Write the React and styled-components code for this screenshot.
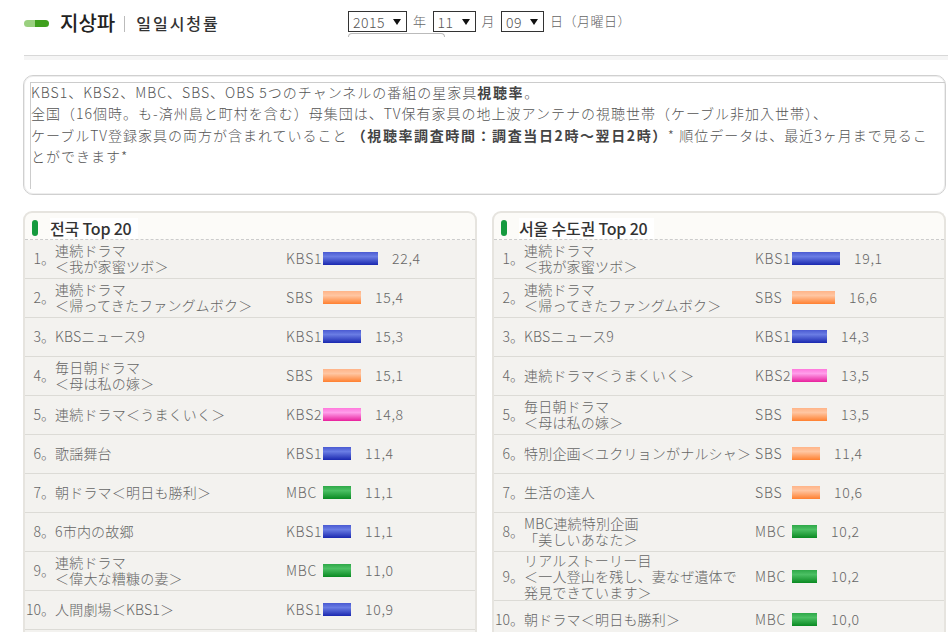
import React from 'react';
import styled, { createGlobalStyle } from 'styled-components';

const leftRows = [
  { rank: '1。', name: ['連続ドラマ', '＜我が家蜜ツボ＞'], channel: 'KBS1', bar: 55, value: '22,4' },
  { rank: '2。', name: ['連続ドラマ', '＜帰ってきたファングムボク＞'], channel: 'SBS', bar: 38, value: '15,4' },
  { rank: '3。', name: ['KBSニュース9'], channel: 'KBS1', bar: 38, value: '15,3' },
  { rank: '4。', name: ['毎日朝ドラマ', '＜母は私の嫁＞'], channel: 'SBS', bar: 38, value: '15,1' },
  { rank: '5。', name: ['連続ドラマ＜うまくいく＞'], channel: 'KBS2', bar: 38, value: '14,8' },
  { rank: '6。', name: ['歌謡舞台'], channel: 'KBS1', bar: 28, value: '11,4' },
  { rank: '7。', name: ['朝ドラマ＜明日も勝利＞'], channel: 'MBC', bar: 28, value: '11,1' },
  { rank: '8。', name: ['6市内の故郷'], channel: 'KBS1', bar: 28, value: '11,1' },
  { rank: '9。', name: ['連続ドラマ', '＜偉大な糟糠の妻＞'], channel: 'MBC', bar: 28, value: '11,0' },
  { rank: '10。', name: ['人間劇場＜KBS1＞'], channel: 'KBS1', bar: 28, value: '10,9' },
];

const rightRows = [
  { rank: '1。', name: ['連続ドラマ', '＜我が家蜜ツボ＞'], channel: 'KBS1', bar: 48, value: '19,1' },
  { rank: '2。', name: ['連続ドラマ', '＜帰ってきたファングムボク＞'], channel: 'SBS', bar: 43, value: '16,6' },
  { rank: '3。', name: ['KBSニュース9'], channel: 'KBS1', bar: 35, value: '14,3' },
  { rank: '4。', name: ['連続ドラマ＜うまくいく＞'], channel: 'KBS2', bar: 35, value: '13,5' },
  { rank: '5。', name: ['毎日朝ドラマ', '＜母は私の嫁＞'], channel: 'SBS', bar: 35, value: '13,5' },
  { rank: '6。', name: ['特別企画＜ユクリョンがナルシャ＞'], channel: 'SBS', bar: 28, value: '11,4' },
  { rank: '7。', name: ['生活の達人'], channel: 'SBS', bar: 28, value: '10,6' },
  { rank: '8。', name: ['MBC連続特別企画', '「美しいあなた＞'], channel: 'MBC', bar: 25, value: '10,2' },
  { rank: '9。', name: ['リアルストーリー目', '＜一人登山を残し、妻なぜ遺体で', '発見できています＞'], channel: 'MBC', bar: 25, value: '10,2', tall: true },
  { rank: '10。', name: ['朝ドラマ＜明日も勝利＞'], channel: 'MBC', bar: 25, value: '10,0' },
];

// top, highlight, bottom of each channel's bar
const barColors = {
  KBS1: ['#4a5ad2', '#6a7de4', '#1a28b0'],
  KBS2: ['#ff78dc', '#ff9eea', '#e8209c'],
  SBS: ['#ffb488', '#ffc6a2', '#ff8030'],
  MBC: ['#2ea848', '#4cc064', '#0a8a22'],
};

const GlobalStyle = createGlobalStyle`
  html, body {
    margin: 0;
    padding: 0;
    background: #fff;
    overflow: hidden;
  }
  body {
    font-family: "Noto Sans CJK JP", "Noto Sans CJK KR", "Liberation Sans", sans-serif;
    font-weight: 300;
    color: #555;
  }
`;

const Page = styled.div`
  width: 948px;
  height: 632px;
  overflow: hidden;
  box-sizing: border-box;
  padding-left: 23px;
`;

const Header = styled.header`
  display: flex;
  height: 55px;
  margin-left: 1px;
  box-sizing: border-box;
`;

const Logo = styled.div`
  display: flex;
  align-items: center;
  width: 324px;
  height: 47px;
`;

const Pill = styled.span`
  width: 25px;
  height: 7px;
  margin-right: 11px;
  border-radius: 4px;
  background: linear-gradient(90deg, #9ad07f 0 45%, #3fa01d 45% 100%);
`;

const LogoMain = styled.span`
  margin-top: -2px;
  font-family: "Noto Sans CJK KR", sans-serif;
  font-size: 20px;
  font-weight: 500;
  color: #222;
`;

const LogoDivider = styled.span`
  width: 1px;
  height: 16px;
  margin: 0 11px 0 9px;
  background: #bbb;
`;

const LogoSub = styled.span`
  margin-top: -2px;
  font-family: "Noto Sans CJK KR", sans-serif;
  font-size: 16px;
  font-weight: 500;
  color: #333;
  letter-spacing: 2px;
`;

const DateArea = styled.div`
  position: relative;
  display: flex;
  align-items: center;
  height: 21px;
  margin-top: 11px;
  font-size: 13px;
  color: #666;
`;

const PeekTab = styled.div`
  position: absolute;
  left: 0;
  top: 22px;
  width: 95px;
  height: 3px;
  border: 1px solid #bbb;
  border-bottom: 0;
  border-radius: 4px 4px 0 0;
`;

const SelectWrap = styled.div`
  position: relative;
  width: ${(p) => p.$width}px;
  height: 21px;

  &::after {
    content: '';
    position: absolute;
    right: 6px;
    top: 8px;
    border-left: 4px solid transparent;
    border-right: 4px solid transparent;
    border-top: 6px solid #111;
  }
`;

const DateSelect = styled.select`
  appearance: none;
  display: block;
  width: 100%;
  height: 100%;
  box-sizing: border-box;
  padding: 0 0 0 4px;
  border: 1px solid #333;
  border-radius: 0;
  background: #fff;
  font-family: "Noto Sans CJK JP", sans-serif;
  font-weight: 300;
  font-size: 14px;
  letter-spacing: 0.5px;
  color: #555;
`;

const DateLabel = styled.span`
  margin: -2px 6px 0;
  letter-spacing: 0.5px;
`;

const HeaderBand = styled.div`
  height: 4px;
  margin: 0 0 15px 1px;
  border-top: 1px solid #d8d8d8;
  background: #f5f5f5;
`;

const Notice = styled.section`
  width: 923px;
  height: 120px;
  box-sizing: border-box;
  padding: 6px 0 5px 6px;
  border: 1px solid #d0d0d0;
  border-radius: 10px;
  box-shadow: 0 0 0 1px #eee inset;
`;

const NoticeBody = styled.div`
  height: 100%;
  box-sizing: border-box;
  border-top: 1px solid #ccc;
  border-left: 1px solid #ccc;
`;

const NoticeText = styled.p`
  margin: -1px 0 0;
  font-size: 14px;
  line-height: 21.4px;
  letter-spacing: 1px;
  white-space: nowrap;
`;

const Strong = styled.strong`
  font-weight: 700;
  color: #444;
  letter-spacing: 1.6px;
`;

const Columns = styled.div`
  display: grid;
  grid-template-columns: 454px 454px;
  column-gap: 15px;
  margin-top: 16px;
`;

const Panel = styled.section`
  height: 480px;
  border: 2px solid #e6e4df;
  border-bottom: 0;
  border-radius: 9px 9px 0 0;
  background: #fcfbf8;
  box-sizing: border-box;
`;

const PanelHead = styled.div`
  display: flex;
  align-items: center;
  height: 27px;
  box-sizing: border-box;
  padding: 4px 0 0 7px;
  border-bottom: 1px dashed #ccc;
`;

const HeadMark = styled.span`
  width: 6px;
  height: 16px;
  margin-right: 12px;
  border-radius: 3px;
  background: #159a3e;
`;

const PanelTitle = styled.h2`
  margin: 0;
  padding-right: 6px;
  background: #fff;
  font-family: "Noto Sans CJK KR", sans-serif;
  font-size: 16px;
  font-weight: 500;
  line-height: 21px;
  color: #333;
  letter-spacing: -0.2px;
`;

const Row = styled.div`
  display: grid;
  grid-template-columns: 30px 231px 37px 1fr;
  align-items: center;
  height: ${(p) => (p.$tall ? 49 : 39)}px;
  box-sizing: border-box;
  padding-bottom: 2px;
  border-bottom: 1px solid #dcdbd6;
  background: #f3f2ef;
  font-size: 14px;
  color: #666;
`;

const Rank = styled.div`
  text-align: right;
  white-space: nowrap;
`;

const ProgramName = styled.div`
  line-height: 16px;
  letter-spacing: 0.2px;
  white-space: nowrap;
`;

const Channel = styled.div`
  letter-spacing: 0.8px;
`;

const BarCell = styled.div`
  display: flex;
  align-items: center;
`;

const Bar = styled.span`
  height: 13px;
  margin-right: 14px;
  background: linear-gradient(
    180deg,
    ${(p) => barColors[p.$channel][0]},
    ${(p) => barColors[p.$channel][1]} 35%,
    ${(p) => barColors[p.$channel][2]}
  );
`;

const Rating = styled.span`
  letter-spacing: 0.7px;
`;

const RatingRow = ({ row }) => (
  <Row $tall={row.tall}>
    <Rank>{row.rank}</Rank>
    <ProgramName>
      {row.name.map((line) => (
        <div key={line}>{line}</div>
      ))}
    </ProgramName>
    <Channel>{row.channel}</Channel>
    <BarCell>
      <Bar $channel={row.channel} style={{ width: row.bar }} />
      <Rating>{row.value}</Rating>
    </BarCell>
  </Row>
);

const RatingPanel = ({ title, rows }) => (
  <Panel>
    <PanelHead>
      <HeadMark />
      <PanelTitle>{title}</PanelTitle>
    </PanelHead>
    {rows.map((row) => (
      <RatingRow key={row.rank} row={row} />
    ))}
    <Row />
  </Panel>
);

const App = () => (
  <Page>
    <GlobalStyle />
    <Header>
      <Logo>
        <Pill />
        <LogoMain>지상파</LogoMain>
        <LogoDivider />
        <LogoSub>일일시청률</LogoSub>
      </Logo>
      <DateArea>
        <SelectWrap $width={59}>
          <DateSelect defaultValue="2015"><option>2015</option></DateSelect>
        </SelectWrap>
        <DateLabel>年</DateLabel>
        <SelectWrap $width={43}>
          <DateSelect defaultValue="11"><option>11</option></DateSelect>
        </SelectWrap>
        <DateLabel>月</DateLabel>
        <SelectWrap $width={43}>
          <DateSelect defaultValue="09"><option>09</option></DateSelect>
        </SelectWrap>
        <DateLabel>日（月曜日）</DateLabel>
        <PeekTab />
      </DateArea>
    </Header>
    <HeaderBand />
    <Notice>
      <NoticeBody>
        <NoticeText>
          KBS1、KBS2、MBC、SBS、OBS 5つのチャンネルの番組の星家具<Strong>視聴率</Strong>。<br />
          全国（16個時。も-済州島と町村を含む）母集団は、TV保有家具の地上波アンテナの視聴世帯（ケーブル非加入世帯）、<br />
          ケーブルTV登録家具の両方が含まれていること <Strong>（視聴率調査時間：調査当日2時〜翌日2時）</Strong>* 順位データは、最近3ヶ月まで見るこ<br />
          とができます*
        </NoticeText>
      </NoticeBody>
    </Notice>
    <Columns>
      <RatingPanel title="전국 Top 20" rows={leftRows} />
      <RatingPanel title="서울 수도권 Top 20" rows={rightRows} />
    </Columns>
  </Page>
);

export default App;
